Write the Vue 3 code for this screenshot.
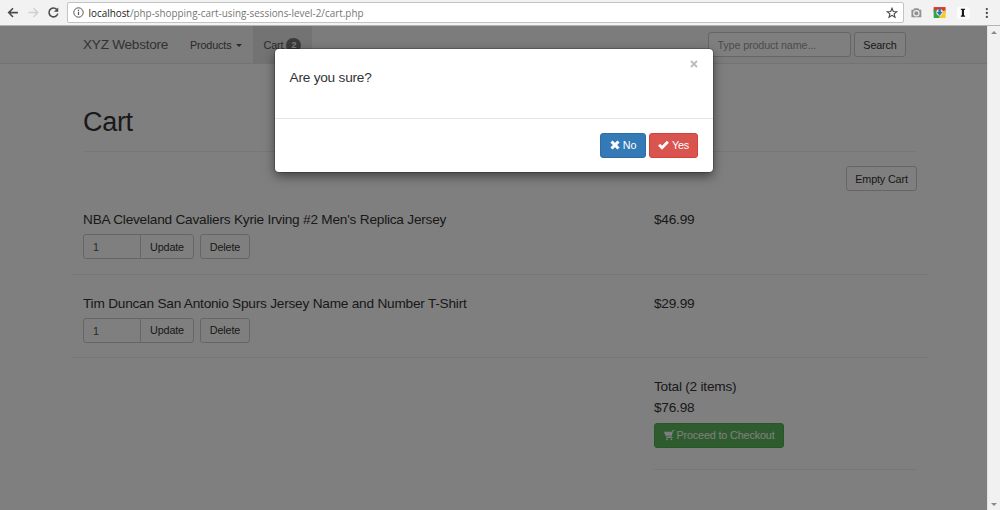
<script setup>
const items = [
  { name: "NBA Cleveland Cavaliers Kyrie Irving #2 Men's Replica Jersey", price: '$46.99', qty: 1 },
  { name: 'Tim Duncan San Antonio Spurs Jersey Name and Number T-Shirt', price: '$29.99', qty: 1 },
]
</script>

<template>
  <div class="browser">
    <header class="chrome">
      <svg class="nav-icons" width="68" height="25" viewBox="0 0 68 25" fill="none">
        <path d="M18.2 12.6H9M13.2 8.2L8.8 12.6l4.4 4.4" stroke="#4c4c4c" stroke-width="1.6" />
        <path d="M29 12.6h9.2M34 8.2l4.4 4.4L34 17" stroke="#cfcfcf" stroke-width="1.5" />
        <path d="M57.6 9.4A4.5 4.5 0 1 0 58.6 13.6" stroke="#4c4c4c" stroke-width="1.6" />
        <path d="M59.1 7.4v4.4h-4.4z" fill="#4c4c4c" />
      </svg>
      <div class="address">
        <svg width="11" height="11" viewBox="0 0 11 11" fill="none" stroke="#555">
          <circle cx="5.5" cy="5.5" r="4.7" stroke-width="1" />
          <path d="M5.5 4.8v3.3M5.5 2.7v1.2" stroke-width="1.2" />
        </svg>
        <div class="url"><b>localhost</b>/php-shopping-cart-using-sessions-level-2/cart.php</div>
        <svg class="star" width="12" height="12" viewBox="0 0 12 12" fill="none" stroke="#484848" stroke-width="1.1">
          <path d="M6 1.3l1.3 3.2 3.5.2-2.7 2.2.9 3.4L6 8.4l-3 1.9.9-3.4L1.2 4.7l3.5-.2z" />
        </svg>
      </div>
      <svg class="ext" width="97" height="25" viewBox="0 0 97 25">
        <path d="M7.5 9.800h2l1-1.500h4l1 1.500h2v7.500h-10z" fill="#929292" />
        <circle cx="12.500" cy="13.300" r="2.700" fill="#929292" stroke="#f2f2f2" stroke-width="1.100" />
        <path d="M30 7h12v5.500H30z" fill="#d9372c" />
        <path d="M30 9l6 3.500V18h-6z" fill="#35a24c" />
        <path d="M42 10v8h-6v-5.500z" fill="#f3cb24" />
        <circle cx="36" cy="12.300" r="3.400" fill="#e4e4dc" />
        <path d="M34.800 8.800h2.400v3.200H39l-3 3.800-3-3.800h1.800z" fill="#2872b8" />
        <rect x="53.500" y="7" width="13" height="12" rx="2" fill="#fcfcfc" />
        <path d="M57.400 8.700h4.300v1l-1.100.4v5.300l1.100.4v1h-4.300v-1l1.100-.4v-5.300l-1.100-.4z" fill="#151515" />
        <g fill="#4a4a4a"><circle cx="83.700" cy="9" r="1.150" /><circle cx="83.700" cy="13" r="1.150" /><circle cx="83.700" cy="17" r="1.150" /></g>
      </svg>
    </header>

    <div class="viewport">
      <main class="page">
        <nav class="navbar">
          <div class="brand">XYZ Webstore</div>
          <div class="nav-item products">Products <i class="caret"></i></div>
          <div class="nav-item active">Cart <span class="badge">2</span></div>
          <div class="search">
            <div class="field">Type product name...</div>
            <div class="btn">Search</div>
          </div>
        </nav>

        <section class="content">
          <h1>Cart</h1>
          <div class="empty-row"><div class="btn empty">Empty Cart</div></div>

          <article v-for="item in items" :key="item.name" class="item">
            <div class="info">
              <h4>{{ item.name }}</h4>
              <div class="controls">
                <div class="qty">{{ item.qty }}</div>
                <div class="btn update">Update</div>
                <div class="btn delete">Delete</div>
              </div>
            </div>
            <h4>{{ item.price }}</h4>
          </article>

          <div class="total">
            <h4>Total (2 items)</h4>
            <h4>$76.98</h4>
            <div class="btn checkout">
              <svg width="11" height="11" viewBox="0 0 11 11" fill="currentColor">
                <path d="M0 1.800h7.900l.5-1.600h2.400v.9H9.100L7.400 7.300h1.300v.8H2.100v-.8h.4L2 6.500h4.800l.2-.7H1.300z" />
                <circle cx="3" cy="9.300" r=".9" /><circle cx="7.400" cy="9.300" r=".9" />
              </svg>
              <span>Proceed to Checkout</span>
            </div>
          </div>
        </section>
        <div class="backdrop"></div>
      </main>

      <aside class="scrollbar"><i class="up"></i><i class="down"></i></aside>

      <div class="modal">
        <div class="modal-body">
          <h4>Are you sure?</h4>
          <svg width="8" height="8" viewBox="0 0 8 8" stroke="#bdbdbd" stroke-width="1.900">
            <path d="M1 1l6 6M7 1L1 7" />
          </svg>
        </div>
        <div class="modal-footer">
          <div class="btn no">
            <svg width="10" height="10" viewBox="0 0 10 10" stroke="#fff" stroke-width="3.100"><path d="M1.500 1.500l7 7M8.500 1.500l-7 7" /></svg>
            <span>No</span>
          </div>
          <div class="btn yes">
            <svg width="11" height="10" viewBox="0 0 11 10" fill="none" stroke="#fff" stroke-width="2.800"><path d="M1.100 4.800l2.900 2.900 5.900-6" /></svg>
            <span>Yes</span>
          </div>
        </div>
      </div>
    </div>
  </div>
</template>

<style>
body { margin: 0; overflow: hidden; }
</style>

<style scoped>
* { box-sizing: border-box; }
.browser { width: 1000px; height: 510px; overflow: hidden; display: flex; flex-direction: column; font: 10.8px/15px "Liberation Sans", Arial, sans-serif; letter-spacing: -.15px; color: #333; }
.chrome { height: 26px; display: flex; background: #f2f2f2; border-bottom: 1px solid #b4b4b4; flex: none; }
.nav-icons { width: 67px; flex: none; }
.address { margin-top: 2px; width: 837px; height: 21px; border: 1px solid #c3c3c3; border-radius: 2px; background: #fff; display: flex; align-items: center; padding: 0 5px; flex: none; }
.url { margin-left: 4.5px; font: 9.9px/16px "Open Sans", "Noto Sans", sans-serif; letter-spacing: 0; color: #777; white-space: nowrap; flex: 1; }
.url b { font-weight: 400; color: #222; }
.ext { width: 96px; flex: none; }

.viewport { position: relative; display: flex; flex: 1; }
.page { position: relative; width: 988px; background: #fff; border-right: 1px solid #e4e4e4; }
.backdrop { position: absolute; inset: 0; background: rgba(0, 0, 0, .5); }
.navbar { height: 38px; display: flex; align-items: center; background: #f8f8f8; border-bottom: 1px solid #e7e7e7; padding-left: 83px; color: #555; }
.brand { width: 98px; font-size: 13.6px; letter-spacing: -.25px; color: #666; white-space: nowrap; }
.nav-item { height: 37px; display: flex; align-items: center; white-space: nowrap; padding-top: 1px; }
.products { width: 72px; padding-left: 9px; }
.caret { border: 3px solid transparent; border-top-color: #555; border-bottom: 0; margin-left: 4.5px; }
.active { width: 59px; padding-left: 10.500px; background: #e7e7e7; }
.badge { margin-left: 3px; width: 15px; height: 14px; border-radius: 7px; background: #777; color: #fff; font: bold 8.8px/14px "Liberation Sans", Arial, sans-serif; text-align: center; }
.search { display: flex; gap: 3px; margin-left: 396px; }
.field { width: 143px; height: 25px; border: 1px solid #ccc; border-radius: 3px; background: #fff; color: #999; padding: 4px 8.5px; line-height: 16px; }
.btn { height: 25px; padding-top: 1px; border: 1px solid #ccc; border-radius: 3px; background: #fff; color: #333; display: flex; align-items: center; justify-content: center; white-space: nowrap; flex: none; }
.search .btn { width: 52px; }

.content { padding: 0 59px 0 72px; }
h1 { margin: 0 11px; height: 88px; padding-top: 43px; border-bottom: 1px solid #eee; font-size: 27px; letter-spacing: -.3px; line-height: 31px; font-weight: 400; }
h4 { margin: 0; font-size: 13.65px; letter-spacing: -.22px; line-height: 16px; font-weight: 400; white-space: nowrap; }
.empty-row { display: flex; justify-content: flex-end; margin: 14px 11px 21px; }
.empty { width: 71px; }
.item { height: 62.5px; padding: 0 11px; display: flex; border-bottom: 1px solid #eee; margin-bottom: 21px; }
.info { width: 571px; flex: none; }
.controls { display: flex; margin-top: 6px; }
.qty { width: 58px; height: 25px; border: 1px solid #ccc; border-radius: 3px 0 0 3px; padding: 4px 9px; line-height: 16px; color: #555; }
.update { width: 54px; margin-left: -1px; border-radius: 0 3px 3px 0; }
.delete { width: 50px; margin-left: 6px; }
.total { margin-left: 582px; width: 263px; height: 91px; border-bottom: 1px solid #eee; }
.total h4 { margin-bottom: 5px; }
.checkout { width: 130px; margin-top: 7px; padding-top: 0; background: #5cb85c; border-color: #4cae4c; color: #fff; gap: 2px; }
.checkout svg { margin-top: -1px; }

.scrollbar { width: 12px; background: #f1f1f1; display: flex; flex-direction: column; align-items: center; justify-content: space-between; padding: 5px 0 4px; }
.up, .down { border: 3px solid transparent; }
.up { border-top: 0; border-bottom-color: #8a8a8a; }
.down { border-bottom: 0; border-top-color: #8a8a8a; }

.modal { position: absolute; left: 275px; top: 23px; width: 438px; height: 123px; background: #fff; border-radius: 4px; box-shadow: 0 0 0 1px rgba(0, 0, 0, .2), 0 4px 11px rgba(0, 0, 0, .5); }
.modal-body { height: 70px; display: flex; justify-content: space-between; padding: 21px 15px 0 14.5px; border-bottom: 1px solid #e5e5e5; }
.modal-body svg { margin-top: -10px; }
.modal-footer { display: flex; justify-content: flex-end; gap: 3px; padding: 13.5px 15px; }
.modal-footer .btn { color: #fff; gap: 3px; padding-top: 0; }
.modal-footer svg { margin-top: -1px; }
.no { width: 46px; background: #337ab7; border-color: #2e6da4; }
.yes { width: 49px; background: #d9534f; border-color: #d43f3a; }
</style>
